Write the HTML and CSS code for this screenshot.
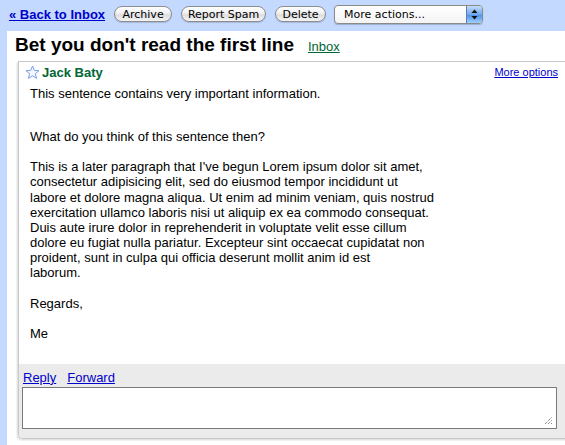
FILE: index.html
```html
<!DOCTYPE html>
<html>
<head>
<meta charset="utf-8">
<link rel="stylesheet" href="styles.css">
</head>
<body>
<div class="topbar">
  <a class="back" href="#">&laquo; Back to Inbox</a>
  <span class="btn btn-archive">Archive</span>
  <span class="btn btn-spam">Report Spam</span>
  <span class="btn btn-delete">Delete</span>
  <span class="select"><span class="select-text">More actions...</span><span class="select-arrows"><svg width="7" height="11" viewBox="0 0 7 11"><path d="M3.5 0.5 L6.5 4 L0.5 4 Z" fill="#111"/><path d="M3.5 10.5 L6.5 7 L0.5 7 Z" fill="#111"/></svg></span></span>
</div>
<div class="main">
  <div class="titlerow">
    <h1 class="title">Bet you don't read the first line</h1>
    <a class="label" href="#">Inbox</a>
  </div>
  <div class="card">
    <div class="msghead">
      <svg class="star" width="15" height="15" viewBox="0 0 15 15"><path d="M7.5 1 L9.3 5.4 L14 5.7 L10.4 8.7 L11.6 13.4 L7.5 10.8 L3.4 13.4 L4.6 8.7 L1 5.7 L5.7 5.4 Z" fill="#f4f8ff" stroke="#7b9ee8" stroke-width="1" stroke-linejoin="round"/></svg>
      <span class="sender">Jack Baty</span>
      <a class="moreopts" href="#">More options</a>
    </div>
    <div class="msgbody">
      <p class="p1">This sentence contains very important information.</p>
      <p class="p2">What do you think of this sentence then?</p>
      <p>This is a later paragraph that I've begun Lorem ipsum dolor sit amet,<br>consectetur adipisicing elit, sed do eiusmod tempor incididunt ut<br>labore et dolore magna aliqua. Ut enim ad minim veniam, quis nostrud<br>exercitation ullamco laboris nisi ut aliquip ex ea commodo consequat.<br>Duis aute irure dolor in reprehenderit in voluptate velit esse cillum<br>dolore eu fugiat nulla pariatur. Excepteur sint occaecat cupidatat non<br>proident, sunt in culpa qui officia deserunt mollit anim id est<br>laborum.</p>
      <p>Regards,</p>
      <p>Me</p>
    </div>
    <div class="msgfoot">
      <div class="actions"><a href="#">Reply</a><a href="#">Forward</a></div>
      <div class="reply-box"><svg class="grip" width="9" height="9" viewBox="0 0 9 9"><path d="M1 8 L8 1 M4 8 L8 4 M7 8 L8 7" stroke="#555" stroke-width="1" stroke-dasharray="1 1"/></svg></div>
    </div>
  </div>
</div>
</body>
</html>
```
FILE: styles.css
```css
html, body {
  margin: 0;
  padding: 0;
  height: 100%;
  overflow: hidden;
}
body {
  background: #c3d9ff;
  font-family: "Liberation Sans", Arial, sans-serif;
  font-size: 13px;
  color: #000;
}
.topbar {
  height: 31px;
  display: flex;
  align-items: center;
  padding-left: 9px;
  padding-bottom: 3px;
  box-sizing: border-box;
}
.back {
  color: #0000cc;
  font-weight: bold;
  font-size: 13px;
  margin-right: 9px;
  margin-top: 1px;
}
.btn {
  display: inline-flex;
  align-items: center;
  justify-content: center;
  height: 16px;
  box-sizing: border-box;
  border: 1px solid #8c8c8c;
  border-radius: 9px;
  background: linear-gradient(#ffffff, #f0f0f0 45%, #dedede 55%, #f4f4f4);
  font-family: "DejaVu Sans", sans-serif;
  font-size: 11px;
  color: #000;
  box-shadow: 0 1px 1px rgba(0,0,0,0.15);
  margin-right: 9px;
}
.btn-archive { width: 58px; }
.btn-spam { width: 85px; }
.btn-delete { width: 51px; }
.select {
  display: inline-flex;
  align-items: stretch;
  width: 149px;
  height: 19px;
  box-sizing: border-box;
  border: 1px solid #8a8a8a;
  border-radius: 4px;
  background: linear-gradient(#ffffff, #f4f4f4);
  box-shadow: 0 1px 1px rgba(0,0,0,0.2);
  overflow: hidden;
  margin-left: -1px;
}
.select-text {
  flex: 1;
  font-family: "DejaVu Sans", sans-serif;
  font-size: 11px;
  padding-left: 9px;
  display: flex;
  align-items: center;
}
.select-arrows {
  width: 15px;
  display: flex;
  align-items: center;
  justify-content: center;
  background: linear-gradient(#c5dcf7, #6fa8ec 50%, #4a8fe4 51%, #9fd0fb);
  border-left: 1px solid #5a80b8;
}
.main {
  margin-left: 7px;
  background: #fff;
  height: calc(100% - 31px);
}
.titlerow {
  display: flex;
  align-items: baseline;
  padding-left: 8px;
  height: 30px;
  box-sizing: border-box;
  padding-top: 3px;
}
.title {
  margin: 0;
  font-size: 19px;
  font-weight: bold;
}
.label {
  color: #006633;
  font-size: 13px;
  margin-left: 14px;
}
.card {
  margin-left: 11px;
  margin-right: -10px;
  border: 1px solid #c8c8c8;
  border-right: none;
  border-bottom-left-radius: 5px;
  box-shadow: -1px 1px 0 #e2e2e2, -2px 2px 0 #f2f2f2;
  overflow: hidden;
}
.msghead {
  display: flex;
  align-items: center;
  height: 20px;
  padding-left: 6px;
  padding-right: 17px;
}
.star {
  margin-right: 2px;
}
.sender {
  color: #006633;
  font-weight: bold;
  font-size: 13px;
  flex: 1;
}
.moreopts {
  color: #0000cc;
  font-size: 11px;
}
.msgbody {
  padding: 4px 0 0 11px;
  height: 278px;
  line-height: 15.15px;
}
.msgbody p {
  margin: 0 0 15px 0;
}
.msgbody .p1 {
  margin-bottom: 28px;
}
.msgfoot {
  background: #ebebeb;
  padding: 3px 0 9px 3px;
}
.actions {
  height: 20px;
  display: flex;
  align-items: center;
  padding-left: 1px;
}
.actions a {
  color: #0000cc;
  margin-right: 11px;
}
.reply-box {
  width: 535px;
  height: 42px;
  box-sizing: border-box;
  border: 1px solid #7a7a7a;
  background: #fff;
  position: relative;
}
.grip {
  position: absolute;
  right: 3px;
  bottom: 3px;
}
```
